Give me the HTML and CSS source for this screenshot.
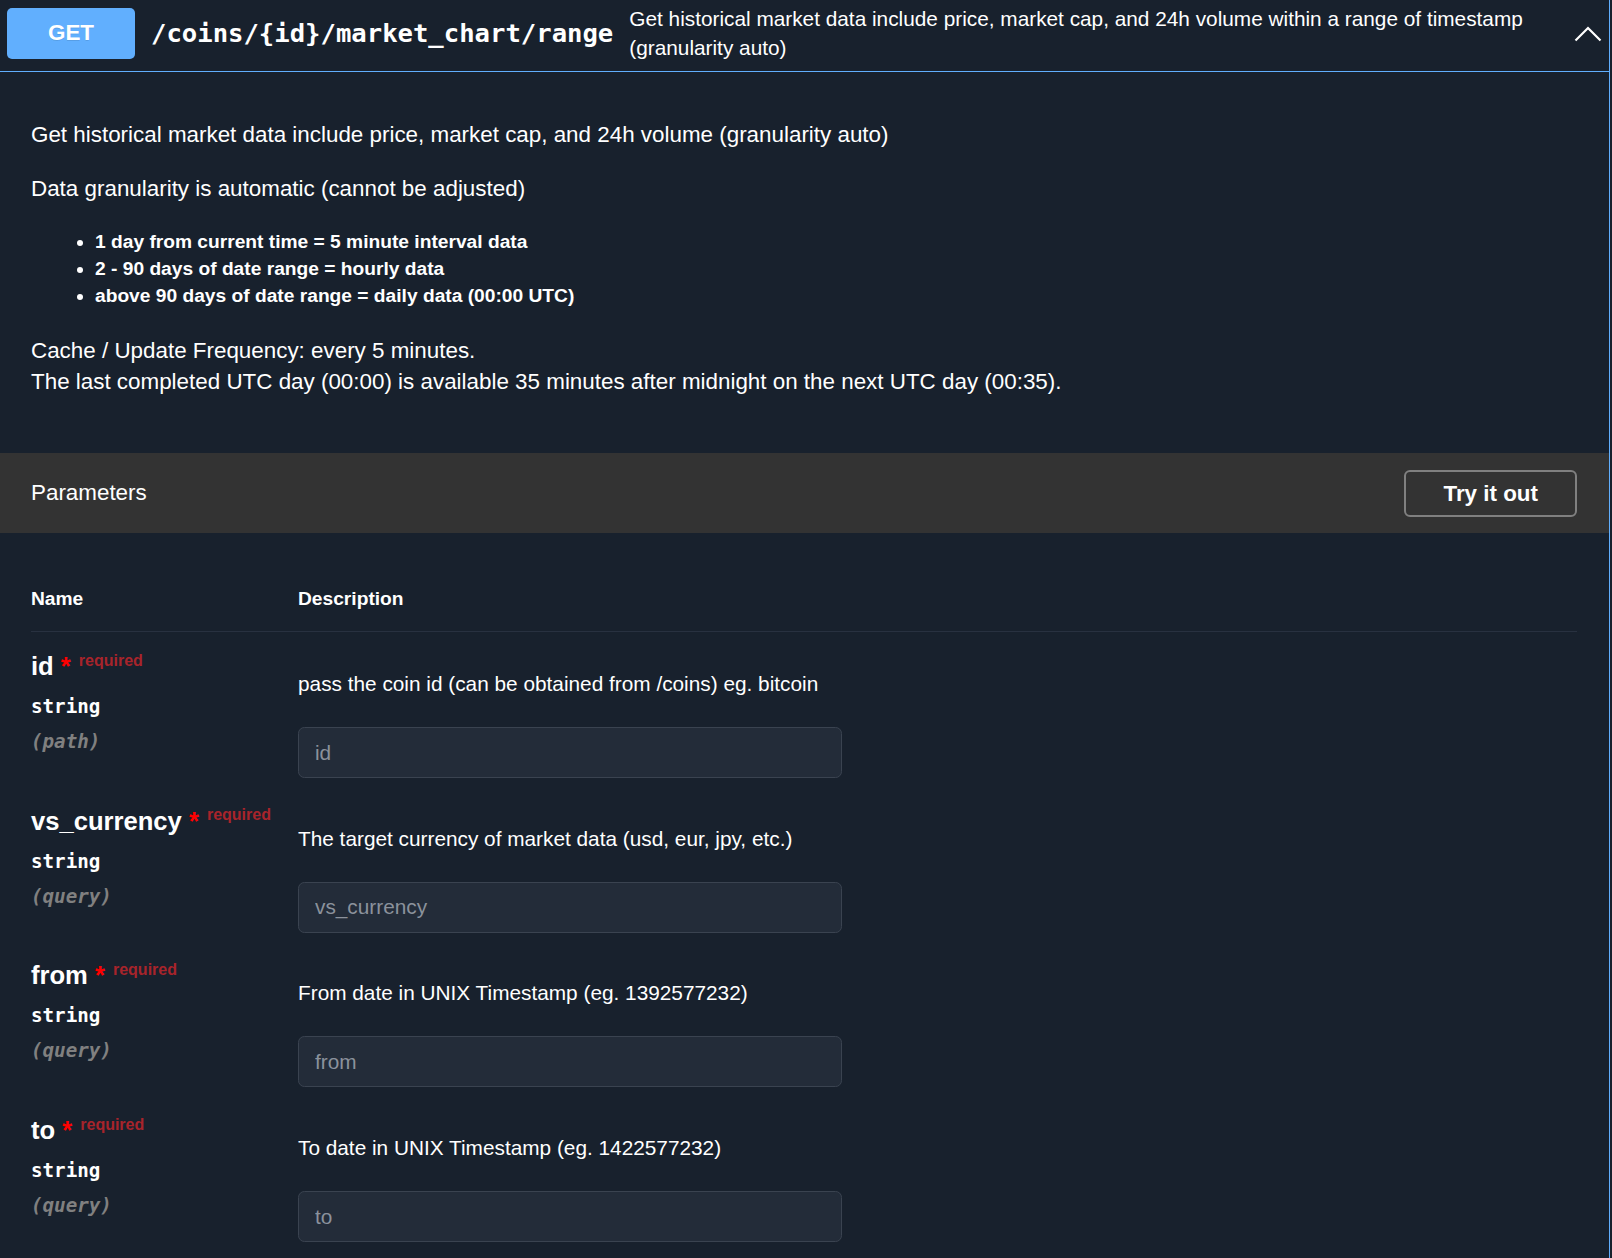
FILE: index.html
```html
<!DOCTYPE html>
<html lang="en">
<head>
<meta charset="utf-8">
<title>/coins/{id}/market_chart/range</title>
<link rel="stylesheet" href="styles.css">
</head>
<body>
<div class="opblock">
  <div class="summary">
    <span class="method">GET</span>
    <span class="path">/coins/{id}/market_chart/range</span>
    <div class="summary-desc">Get historical market data include price, market cap, and 24h volume within a range of timestamp (granularity auto)</div>
    <svg class="arrow" width="32" height="32" viewBox="0 0 32 32"><polyline points="3.5,23.5 16,11 28.5,23.5"/></svg>
  </div>
  <div class="description">
    <p>Get historical market data include price, market cap, and 24h volume (granularity auto)</p>
    <p>Data granularity is automatic (cannot be adjusted)</p>
    <ul>
      <li>1 day from current time = 5 minute interval data</li>
      <li>2 - 90 days of date range = hourly data</li>
      <li>above 90 days of date range = daily data (00:00 UTC)</li>
    </ul>
    <p>Cache / Update Frequency: every 5 minutes.<br>The last completed UTC day (00:00) is available 35 minutes after midnight on the next UTC day (00:35).</p>
  </div>
  <div class="section-header">
    <h4 class="section-title">Parameters</h4>
    <button class="try">Try it out</button>
  </div>
  <div class="params">
    <div class="params-head"><div>Name</div><div>Description</div></div>

    <div class="param">
      <div class="pcol">
        <div class="pname">id<span class="star">&nbsp;*</span><span class="req">required</span></div>
        <div class="ptype">string</div>
        <div class="pin">(path)</div>
      </div>
      <div class="pdesc">
        <p>pass the coin id (can be obtained from /coins) eg. bitcoin</p>
        <input class="pinput" type="text" placeholder="id">
      </div>
    </div>

    <div class="param">
      <div class="pcol">
        <div class="pname">vs_currency<span class="star">&nbsp;*</span><span class="req">required</span></div>
        <div class="ptype">string</div>
        <div class="pin">(query)</div>
      </div>
      <div class="pdesc">
        <p>The target currency of market data (usd, eur, jpy, etc.)</p>
        <input class="pinput" type="text" placeholder="vs_currency">
      </div>
    </div>

    <div class="param">
      <div class="pcol">
        <div class="pname">from<span class="star">&nbsp;*</span><span class="req">required</span></div>
        <div class="ptype">string</div>
        <div class="pin">(query)</div>
      </div>
      <div class="pdesc">
        <p>From date in UNIX Timestamp (eg. 1392577232)</p>
        <input class="pinput" type="text" placeholder="from">
      </div>
    </div>

    <div class="param">
      <div class="pcol">
        <div class="pname">to<span class="star">&nbsp;*</span><span class="req">required</span></div>
        <div class="ptype">string</div>
        <div class="pin">(query)</div>
      </div>
      <div class="pdesc">
        <p>To date in UNIX Timestamp (eg. 1422577232)</p>
        <input class="pinput" type="text" placeholder="to">
      </div>
    </div>
  </div>
</div>
</body>
</html>
```

FILE: styles.css
```css
* { box-sizing: border-box; }
html, body {
  margin: 0;
  padding: 0;
  background: #18212d;
}
body {
  font-family: "Liberation Sans", Arial, Helvetica, sans-serif;
  color: #fff;
  width: 1612px;
  min-height: 1258px;
  overflow: hidden;
}
.opblock {
  width: 1610px;
  min-height: 1258px;
  border-right: 1px solid #61affe;
}
.summary {
  display: flex;
  align-items: center;
  padding: 4px 5px 8.8px 7px;
  border-bottom: 1px solid #61affe;
}
.method {
  flex: none;
  width: 128px;
  height: 51px;
  display: flex;
  align-items: center;
  justify-content: center;
  background: #61affe;
  border-radius: 5px;
  font-size: 22.4px;
  font-weight: 700;
  color: #fff;
  text-shadow: 0 1px 0 rgba(0, 0, 0, 0.1);
}
.path {
  flex: none;
  padding: 0 16px;
  font-family: "DejaVu Sans Mono", monospace;
  font-weight: 700;
  font-size: 25.6px;
  color: #fff;
}
.summary-desc {
  flex: 1;
  font-size: 20.8px;
  line-height: 29.12px;
  color: #fff;
}
.arrow {
  flex: none;
  fill: none;
  stroke: #fff;
  stroke-width: 2.2;
}
.description {
  padding: 25px 32px 33.6px 31px;
}
.description p {
  margin: 22.4px 0;
  font-size: 22.4px;
  line-height: 31.36px;
}
.description ul {
  margin: 23.4px 0 25px;
  padding-left: 64px;
  font-size: 19.2px;
  line-height: 27.2px;
  font-weight: 700;
}
.section-header {
  display: flex;
  align-items: center;
  justify-content: space-between;
  height: 80px;
  padding: 0 32px 0 31px;
  background: #333333;
}
.section-title {
  margin: 0;
  font-size: 22.4px;
  font-weight: 400;
}
.try {
  font-family: "Liberation Sans", Arial, sans-serif;
  font-size: 22.4px;
  font-weight: 700;
  line-height: 27px;
  color: #fff;
  background: transparent;
  border: 2px solid #808080;
  border-radius: 6px;
  padding: 8px 37px;
}
.params {
  padding: 53.35px 32px 0 31px;
}
.params-head {
  display: grid;
  grid-template-columns: 267px 1fr;
  font-size: 19.2px;
  font-weight: 700;
  line-height: 24px;
  padding-bottom: 20.6px;
  border-bottom: 1px solid #283140;
}
.param {
  display: grid;
  grid-template-columns: 267px 1fr;
  padding: 16px 0 8.67px;
}
.pname {
  font-size: 25.6px;
  font-weight: 700;
  line-height: 36px;
  white-space: nowrap;
}
.star {
  color: #ff0000;
}
.req {
  position: relative;
  top: -9.6px;
  padding-left: 8px;
  font-size: 16px;
  color: #a8242b;
}
.ptype {
  margin-top: 6.85px;
  font-family: "DejaVu Sans Mono", monospace;
  font-weight: 700;
  font-size: 19.2px;
  line-height: 24px;
}
.pin {
  margin-top: 10.9px;
  font-family: "DejaVu Sans Mono", monospace;
  font-weight: 700;
  font-style: italic;
  font-size: 19.2px;
  line-height: 24px;
  color: #808080;
}
.pdesc p {
  margin: 23.8px 0 31.2px;
  font-size: 20.8px;
  line-height: 24px;
}
.pinput {
  display: block;
  width: 544px;
  height: 51px;
  margin: 0;
  padding: 0 16px;
  font-family: "Liberation Sans", Arial, sans-serif;
  font-size: 20.8px;
  color: #fff;
  background: #232c39;
  border: 1px solid #3a4350;
  border-radius: 6.4px;
  outline: none;
}
.pinput::placeholder {
  color: #8b929c;
}
```
